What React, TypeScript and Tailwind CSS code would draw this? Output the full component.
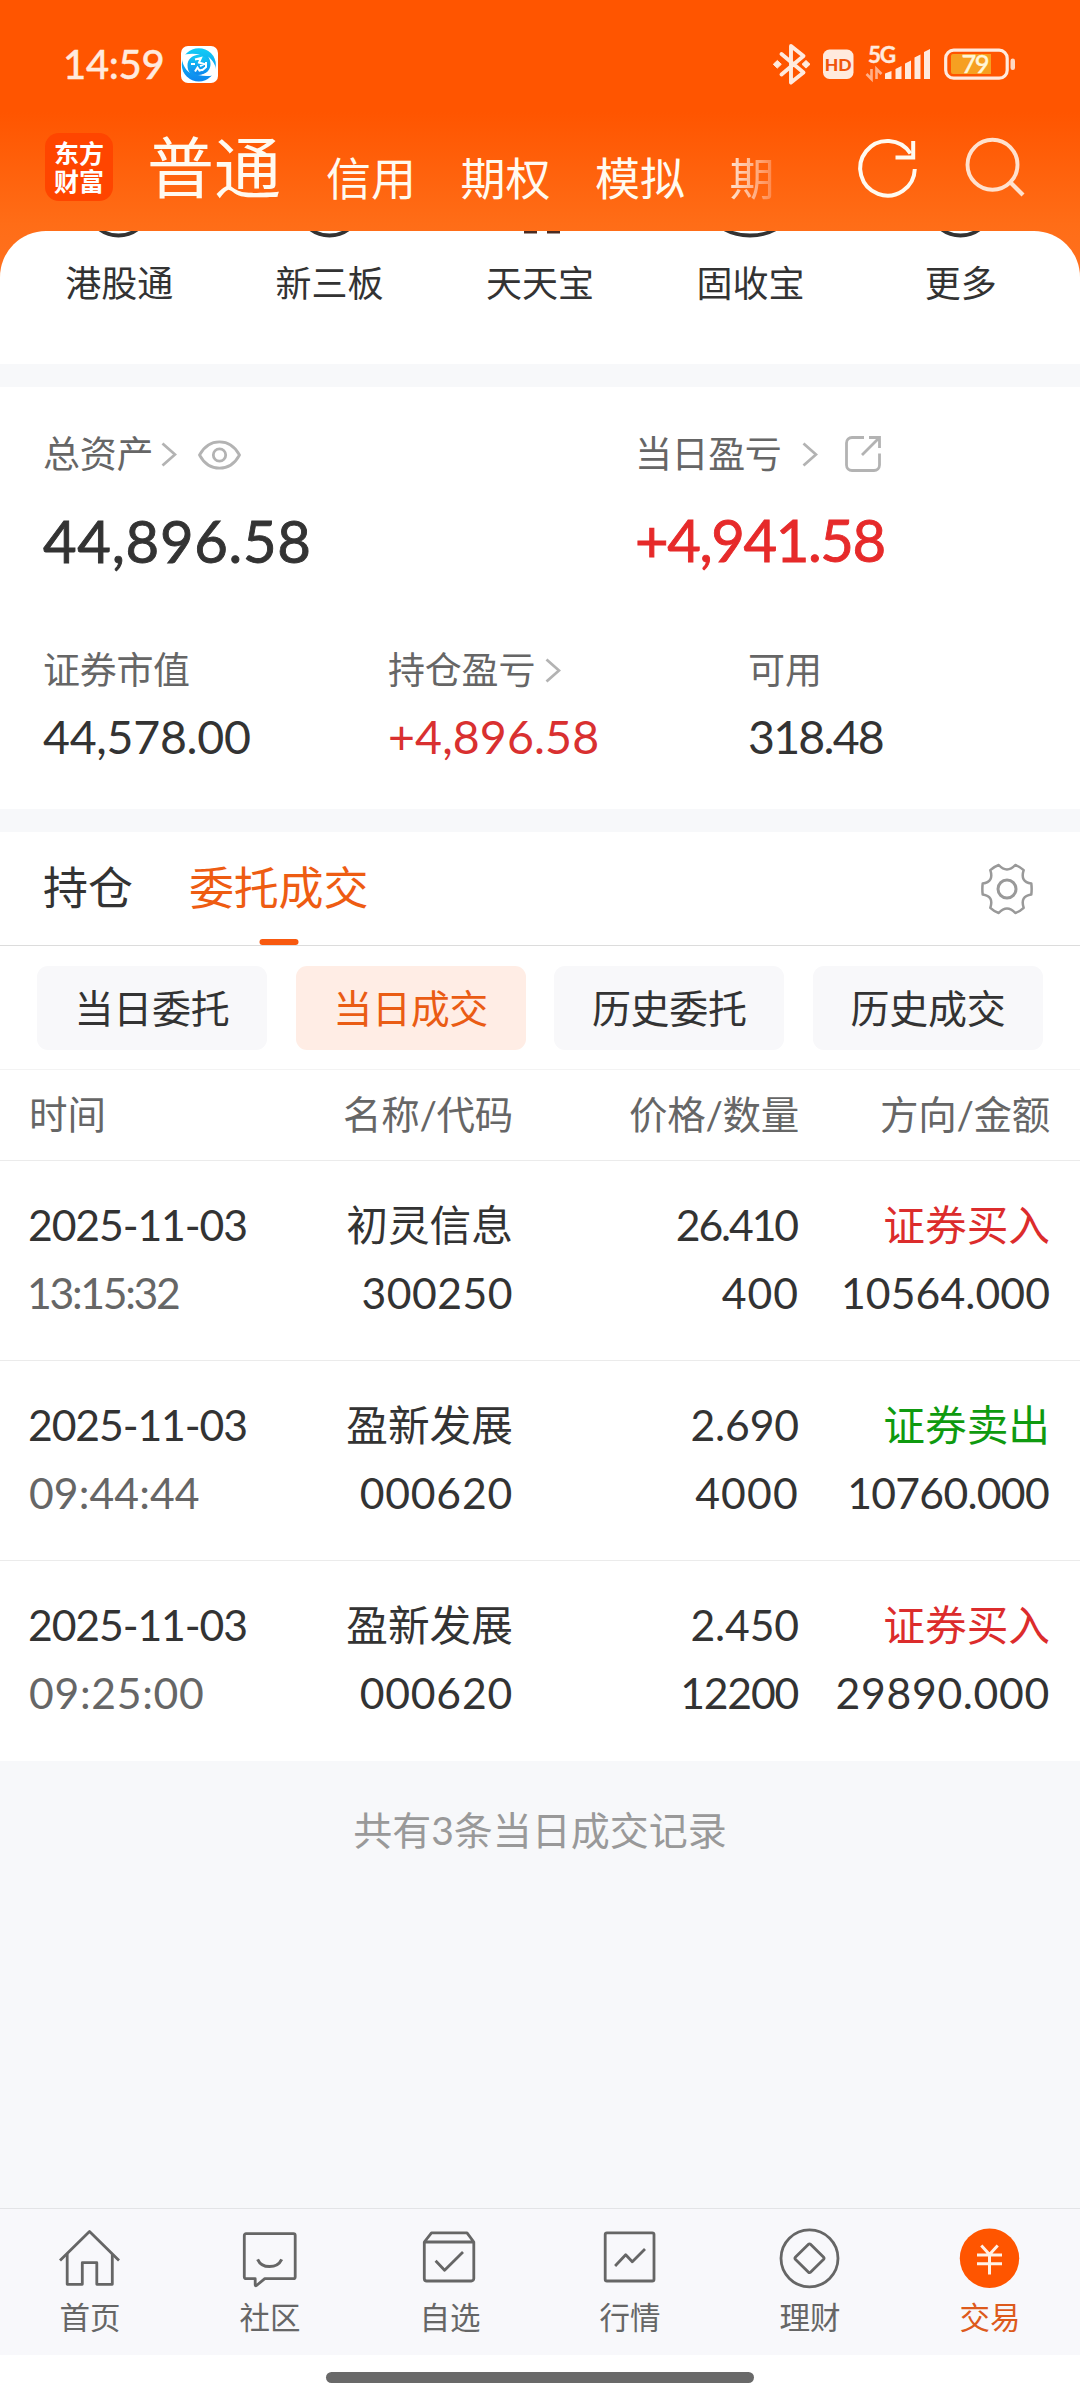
import React from "react";

const quickLinks = ["港股通", "新三板", "天天宝", "固收宝", "更多"];
const accountTabs = ["信用", "期权", "模拟"];
const filters = ["当日委托", "当日成交", "历史委托", "历史成交"];

type Cell = { text: string; cls: string };
type Trade = {
  time: Cell;
  name: string;
  code: Cell;
  price: Cell;
  qty: Cell;
  side: "买入" | "卖出";
  amount: Cell;
};

const trades: Trade[] = [
  {
    time: { text: "13:15:32", cls: "-ml-[2px] tracking-[-2.3px]" },
    name: "初灵信息",
    code: { text: "300250", cls: "tracking-[0.5px]" },
    price: { text: "26.410", cls: "tracking-[-2.1px] pr-[2px]" },
    qty: { text: "400", cls: "tracking-[1px]" },
    side: "买入",
    amount: { text: "10564.000", cls: "tracking-[0.1px]" },
  },
  {
    time: { text: "09:44:44", cls: "tracking-[0.1px]" },
    name: "盈新发展",
    code: { text: "000620", cls: "tracking-[0.8px]" },
    price: { text: "2.690", cls: "tracking-[-0.1px]" },
    qty: { text: "4000", cls: "tracking-[1.2px]" },
    side: "卖出",
    amount: { text: "10760.000", cls: "tracking-[-0.7px] pr-[1px]" },
  },
  {
    time: { text: "09:25:00", cls: "tracking-[0.7px]" },
    name: "盈新发展",
    code: { text: "000620", cls: "tracking-[0.8px]" },
    price: { text: "2.450", cls: "tracking-[-0.1px]" },
    qty: { text: "12200", cls: "tracking-[-1.2px] pr-[1px]" },
    side: "买入",
    amount: { text: "29890.000", cls: "tracking-[0.7px]" },
  },
];

function StatusBar() {
  return (
    <div className="flex h-[129px] items-center pb-[2px] pl-[63px] text-[#ffeade]">
      <span className="w-[118px] text-[40px] font-medium leading-[40px] tracking-[-0.300px] [-webkit-text-stroke:0.400px_#ffeade]">14:59</span>
      <svg className="mt-[2px] h-[37px] w-[37px]" viewBox="0 0 37 37">
        <defs>
          <linearGradient id="globe" x1="0" y1="0" x2="0" y2="1">
            <stop offset="0" stopColor="#12cdf5" />
            <stop offset="1" stopColor="#0e86ee" />
          </linearGradient>
        </defs>
        <rect width="37" height="37" rx="7" fill="#fff" />
        <ellipse cx="17.800" cy="18.800" rx="17" ry="16.600" fill="url(#globe)" />
        <path d="M0 10C5 7.500 12 7 19 8.500 10 9 6.500 14 6.500 19.500c0 3 1 5.500 2.500 7.500C4 23.500 .8 17 1.200 11.500z" fill="#fff" />
        <path d="M36.500 28C31 30.500 24 30.500 17 29c9-.5 12.500-5.500 12.500-11 0-3-1-5.500-2.500-7.500 5 3.500 8.500 10 8 15.500z" fill="#fff" />
        <circle cx="18" cy="19" r="9.800" fill="url(#globe)" />
        <path d="M14 13.500l6-1.500-2 4.500 5 1.500-4 2M10 18h4M25 16v5l-4 3.500M14 25.500l2.500-4 2 3 4-1" fill="none" stroke="#fff" strokeWidth="2" />
      </svg>
      <svg className="ml-[555px] h-[44px] w-[242px] overflow-visible" viewBox="0 0 242 44" fill="none">
        <g stroke="#ffeade" strokeWidth="3.900" strokeLinejoin="round" strokeLinecap="round">
          <path d="M8.500 12L30.500 30.500 18 40.500V4L30.500 14 8.500 32.500" />
        </g>
        <g fill="#ffeade">
          <path d="M4.300 18.500l4 3.800-4 3.800-4-3.800zM33 18.500l4 3.800-4 3.800-4-3.800z" stroke="#ffeade" strokeLinejoin="round" />
          <rect x="50" y="7.500" width="30.500" height="29.500" rx="6.500" />
          <path d="M112 31.500l6.500-2.500V37H112zM122.500 27l6-3V37h-6z" />
          <path d="M132 21.500l6-3v18.500h-6zM141.500 15.500l6-3v24.500h-6zM151 10l6-3v30h-6z" />
        </g>
        <path d="M98.500 27v10l-5-5M103.500 37V27l5 5" stroke="#ffb08a" strokeWidth="2.600" />
        <rect x="172.700" y="8.200" width="61.500" height="28" rx="8" stroke="#ffeade" strokeWidth="3.200" />
        <path d="M180 12h38v20h-38a2 2 0 0 1-2-2V14a2 2 0 0 1 2-2z" fill="#f6a021" />
        <rect x="237.500" y="16.500" width="4.500" height="11.500" rx="2.200" fill="#ffd9c4" />
        <text x="65.200" y="28.500" textAnchor="middle" fontFamily="Lato" fontWeight="900" fontSize="17.500" fill="#f0560c">HD</text>
        <text x="95" y="20.800" fontFamily="Lato" fontWeight="700" fontSize="22.500" fill="#ffeade" stroke="#ffeade" strokeWidth="0.400" textLength="28">5G</text>
        <text x="188.500" y="31" fontFamily="Lato" fontWeight="500" fontSize="25.500" fill="#fff6d8" stroke="#fff6d8" strokeWidth="0.400" textLength="28">79</text>
      </svg>
    </div>
  );
}

function Header() {
  return (
    <div className="flex h-[102px] pl-[45px] text-[#fffaf0]">
      <div className="mt-[4px] flex h-[68px] w-[68px] flex-col items-center justify-center rounded-[14px] bg-[#ff4500] text-[25px] font-bold leading-[28px] text-white">
        <span>东方</span>
        <span>财富</span>
      </div>
      <span className="ml-[34px] mt-[3px] whitespace-nowrap text-[67px] leading-[70px]">普通</span>
      <div className="ml-[45px] mt-[20px] flex gap-[44.500px] text-[45px] leading-[60px]">
        {accountTabs.map((t) => (
          <span key={t} className="w-[90px] whitespace-nowrap">{t}</span>
        ))}
        <span className="w-[45px] bg-gradient-to-r from-[#ffe2cf] to-[#ff8240] bg-clip-text text-transparent">期</span>
      </div>
      <svg className="ml-[75px] mt-[4px] h-[70px] w-[180px]" viewBox="0 0 180 70" fill="none">
        <path d="M64.800 36A27.300 27.300 0 1 1 60.500 20.500" stroke="#fffaf0" strokeWidth="4" />
        <path d="M63.200 8V24.500H45.500" stroke="#fffaf0" strokeWidth="4" />
        <circle cx="142.500" cy="31.700" r="25" stroke="#ffe1ce" strokeWidth="3.900" />
        <path d="M160 49l13 13" stroke="#ffe1ce" strokeWidth="4.300" />
      </svg>
    </div>
  );
}

/* Lower edges of the shortcut icons that are scrolled under the header */
function ShortcutEdge({ index }: { index: number }) {
  return (
    <svg className="h-[8px] w-[60px]" viewBox="0 0 60 8" fill="none" stroke="#333" strokeWidth="3.800">
      {index === 2 ? (
        <path d="M14 0.500h13M37 0.500h13" stroke="#4a2c22" strokeWidth="4" />
      ) : index === 3 ? (
        <ellipse cx="30" cy="-15.500" rx="35" ry="20" />
      ) : (
        <circle cx="29.500" cy="-27.500" r="32" />
      )}
    </svg>
  );
}

function Chevron({ className }: { className: string }) {
  return (
    <svg className={className} width="16" height="25" viewBox="0 0 16 25" fill="none" stroke="#b3b3b3" strokeWidth="2.800">
      <path d="M1.500 1.500L14 12.500 1.500 23.500" />
    </svg>
  );
}

function Assets() {
  return (
    <section className="h-[422px] bg-white pl-[43px] pt-[47px] text-[37px] leading-[40px] text-[#666]">
      <div className="grid grid-cols-[592px_1fr]">
        <div className="flex h-[40px] items-center">
          <span className="tracking-[-0.200px]">总资产</span>
          <Chevron className="ml-[8px]" />
          <svg className="ml-[21px] mt-px" width="43" height="32" viewBox="0 0 43 32" fill="none" stroke="#b3b3b3" strokeWidth="2.800">
            <path d="M1.500 16C11-1.500 32-1.500 41.500 16 32 33.500 11 33.500 1.500 16z" strokeLinejoin="round" />
            <circle cx="21.500" cy="16" r="6.200" />
          </svg>
        </div>
        <div className="flex h-[40px] items-center">
          <span className="tracking-[-0.400px]">当日盈亏</span>
          <Chevron className="ml-[21px]" />
          <svg className="ml-[27px]" width="36" height="36" viewBox="0 0 36 36" fill="none" stroke="#b3b3b3" strokeWidth="2.800">
            <path d="M19 1.500H7A5.500 5.500 0 0 0 1.500 7v22A5.500 5.500 0 0 0 7 34.500h22a5.500 5.500 0 0 0 5.500-5.500V17.500M24 1.500h10.500V12M34 2L17 19" />
          </svg>
        </div>
        <div className="mt-[37px] text-[58px] leading-[60px] tracking-[0.700px] text-[#333] [-webkit-text-stroke:0.900px_#333]">44,896.58</div>
        <div className="mt-[36px] text-[58px] leading-[60px] tracking-[-1.400px] text-[#e62a2a] [-webkit-text-stroke:0.900px_#e62a2a]">+4,941.58</div>
      </div>
      <div className="mt-[79px] grid grid-cols-[345px_360px_1fr]">
        <div className="tracking-[-0.300px]">证券市值</div>
        <div className="flex items-center tracking-[-0.200px]">
          <span>持仓盈亏</span>
          <Chevron className="ml-[10px]" />
        </div>
        <div>可用</div>
        <div className="mt-[21px] text-[46.500px] leading-[50px] tracking-[-0.300px] text-[#333]">44,578.00</div>
        <div className="mt-[21px] text-[46.500px] leading-[50px] tracking-[0.100px] text-[#d93030]">+4,896.58</div>
        <div className="mt-[21px] text-[46.500px] leading-[50px] tracking-[-1.800px] text-[#333]">318.48</div>
      </div>
    </section>
  );
}

function Tabs() {
  return (
    <div className="flex h-[114px] items-center border-b border-[#dcdcdc] bg-white pl-[43px] pr-[47px] text-[45px] text-[#333]">
      <span>持仓</span>
      <div className="relative ml-[56px] flex h-full items-center tracking-[-0.200px] text-[#ee5c12]">
        委托成交
        <span className="absolute bottom-0 left-1/2 h-[6px] w-[39px] -translate-x-1/2 rounded-full bg-[#f8590f]" />
      </div>
      <svg className="ml-auto h-[52px] w-[52px]" viewBox="-26 -26 52 52" fill="none" stroke="#999" strokeWidth="2.500" strokeLinejoin="round">
        <path d="M-8.300-24Q0-15 8.300-24Q13-22.300 16.700-18.800Q12.800-7.300 24.300-5.500Q25 0 24.300 5.500Q12.800 7.300 16.700 18.800Q13 22.300 8.300 24Q0 15-8.300 24Q-13 22.300-16.700 18.800Q-12.800 7.300-24.300 5.500Q-25 0-24.300-5.500Q-12.800-7.300-16.700-18.800Q-13-22.300-8.300-24z" />
        <circle r="9" strokeWidth="3" />
      </svg>
    </div>
  );
}

function Filters() {
  return (
    <div className="flex h-[124px] justify-between border-b border-[#f3f3f3] bg-white px-[37px] pt-[20px] text-[39px] text-[#333]">
      {filters.map((f, i) => (
        <div
          key={f}
          className={
            i === 1
              ? "flex h-[84px] w-[230px] items-center justify-center rounded-[11px] bg-[#ffede5] tracking-[-0.300px] text-[#ea5c14]"
              : "flex h-[84px] w-[230px] items-center justify-center rounded-[11px] bg-[#f8f8fa] tracking-[-0.300px]"
          }
        >
          {f}
        </div>
      ))}
    </div>
  );
}

function TradeTable() {
  return (
    <div className="bg-white">
      <div className="grid h-[91px] grid-cols-[242px_242px_286px_251px] items-center border-b border-[#ebebeb] pl-[29px] text-right text-[38.500px] text-[#666]">
        <span className="text-left">时间</span>
        <span className="tracking-[-0.300px]">名称/代码</span>
        <span className="tracking-[-0.300px]">价格/数量</span>
        <span className="tracking-[-0.300px]">方向/金额</span>
      </div>
      {trades.map((t, i) => (
        <div
          key={i}
          className="grid h-[200px] grid-cols-[242px_242px_286px_251px] content-start border-b border-[#ebebeb] pl-[29px] pt-[30px] text-right text-[42.700px] leading-[68px] text-[#333] last:border-0"
        >
          <span className="-ml-px text-left tracking-[-1.100px]">2025-11-03</span>
          <span className="text-[41.700px]">{t.name}</span>
          <span className={t.price.cls}>{t.price.text}</span>
          <span className={t.side === "买入" ? "text-[41.700px] text-[#dc2c2c]" : "text-[41.700px] text-[#0f9a0f]"}>证券{t.side}</span>
          <span className={`text-left text-[#666] ${t.time.cls}`}>{t.time.text}</span>
          <span className={t.code.cls}>{t.code.text}</span>
          <span className={t.qty.cls}>{t.qty.text}</span>
          <span className={t.amount.cls}>{t.amount.text}</span>
        </div>
      ))}
    </div>
  );
}

const navItems: { label: string; icon: React.ReactNode }[] = [
  {
    label: "首页",
    icon: (
      <>
        <path d="M5 38.500L34.500 9.500 64 38.500" />
        <path d="M12.200 32V62.300H27.300V40.700H41.800V62.300H57.300V32" />
      </>
    ),
  },
  {
    label: "社区",
    icon: (
      <>
        <path d="M11 11.700H58.500a1.700 1.700 0 0 1 1.700 1.700V55a1.700 1.700 0 0 1-1.700 1.700H29.800L21.500 63.500Q20.200 64.500 20.200 62.500V56.700H11A1.700 1.700 0 0 1 9.300 55V13.400A1.700 1.700 0 0 1 11 11.700z" />
        <path d="M22.600 37.300C27 47 42 47 46.700 37.300" strokeWidth="3" />
      </>
    ),
  },
  {
    label: "自选",
    icon: (
      <>
        <path d="M9.300 20L16.500 10.800H52L58.800 20V56.500a2.500 2.500 0 0 1-2.500 2.500H11.800a2.500 2.500 0 0 1-2.500-2.500zM9.300 20H58.800" />
        <path d="M20.600 38.700L29.600 48.300 48 30" />
      </>
    ),
  },
  {
    label: "行情",
    icon: (
      <>
        <rect x="10.200" y="10.800" width="48.800" height="48.200" rx="1.800" />
        <path d="M20.100 44L30.700 32.700 37.300 39.700 50 27" />
      </>
    ),
  },
  {
    label: "理财",
    icon: (
      <>
        <circle cx="34.500" cy="36.300" r="28.500" />
        <path d="M33.500 22.300a1.400 1.400 0 0 1 2 0L48.700 35.300a1.400 1.400 0 0 1 0 2L35.500 50.300a1.400 1.400 0 0 1-2 0L20.300 37.300a1.400 1.400 0 0 1 0-2z" />
      </>
    ),
  },
  {
    label: "交易",
    icon: (
      <>
        <circle cx="34.500" cy="36.300" r="29.700" fill="#ff5500" stroke="none" />
        <path d="M26.300 23.500L34.500 32.500 42.700 23.500M22 33H47M22 41.700H47M34.500 32V52.500" stroke="#fff1e6" strokeWidth="3" />
      </>
    ),
  },
];

function BottomNav() {
  return (
    <nav className="grid h-[147px] grid-cols-6 border-t border-[#e3e4e6] bg-[#f8f8fb] text-[#666]">
      {navItems.map((n, i) => (
        <div key={n.label} className="flex flex-col items-center pt-[13px]">
          <svg width="70" height="70" viewBox="0 0 70 70" fill="none" stroke="#666" strokeWidth="2.800" strokeLinejoin="round" strokeLinecap="butt">
            {n.icon}
          </svg>
          <span className={i === 5 ? "mt-[5px] text-[30.500px] leading-[40px] text-[#dd5a1c]" : "mt-[5px] text-[30.500px] leading-[40px]"}>
            {n.label}
          </span>
        </div>
      ))}
    </nav>
  );
}

export default function App() {
  return (
    <div className="flex h-[2400px] w-[1080px] flex-col overflow-hidden bg-[#f7f8fa] font-['Lato','Noto_Sans_CJK_SC',sans-serif]">
      <div className="bg-[linear-gradient(180deg,#ff5500_0px,#ff5500_112px,#ff6d17_225px,#ff7120_280px)]">
        <StatusBar />
        <Header />
        <div className="flex h-[133px] overflow-hidden rounded-t-[46px] bg-white px-[14px]">
          {quickLinks.map((q, i) => (
            <div key={q} className="flex flex-1 flex-col items-center text-[36px] leading-[40px] text-[#333]">
              <ShortcutEdge index={i} />
              <span className="mt-[24px]">{q}</span>
            </div>
          ))}
        </div>
      </div>
      <div className="h-[23px] shrink-0" />
      <Assets />
      <div className="h-[23px] shrink-0" />
      <Tabs />
      <Filters />
      <TradeTable />
      <div className="flex h-[138px] items-center justify-center text-[39px] text-[#999]">共有3条当日成交记录</div>
      <div className="mt-auto">
        <BottomNav />
        <div className="flex h-[45px] justify-center bg-white pt-[17px]">
          <div className="h-[11px] w-[428px] rounded-full bg-[#696969]" />
        </div>
      </div>
    </div>
  );
}
